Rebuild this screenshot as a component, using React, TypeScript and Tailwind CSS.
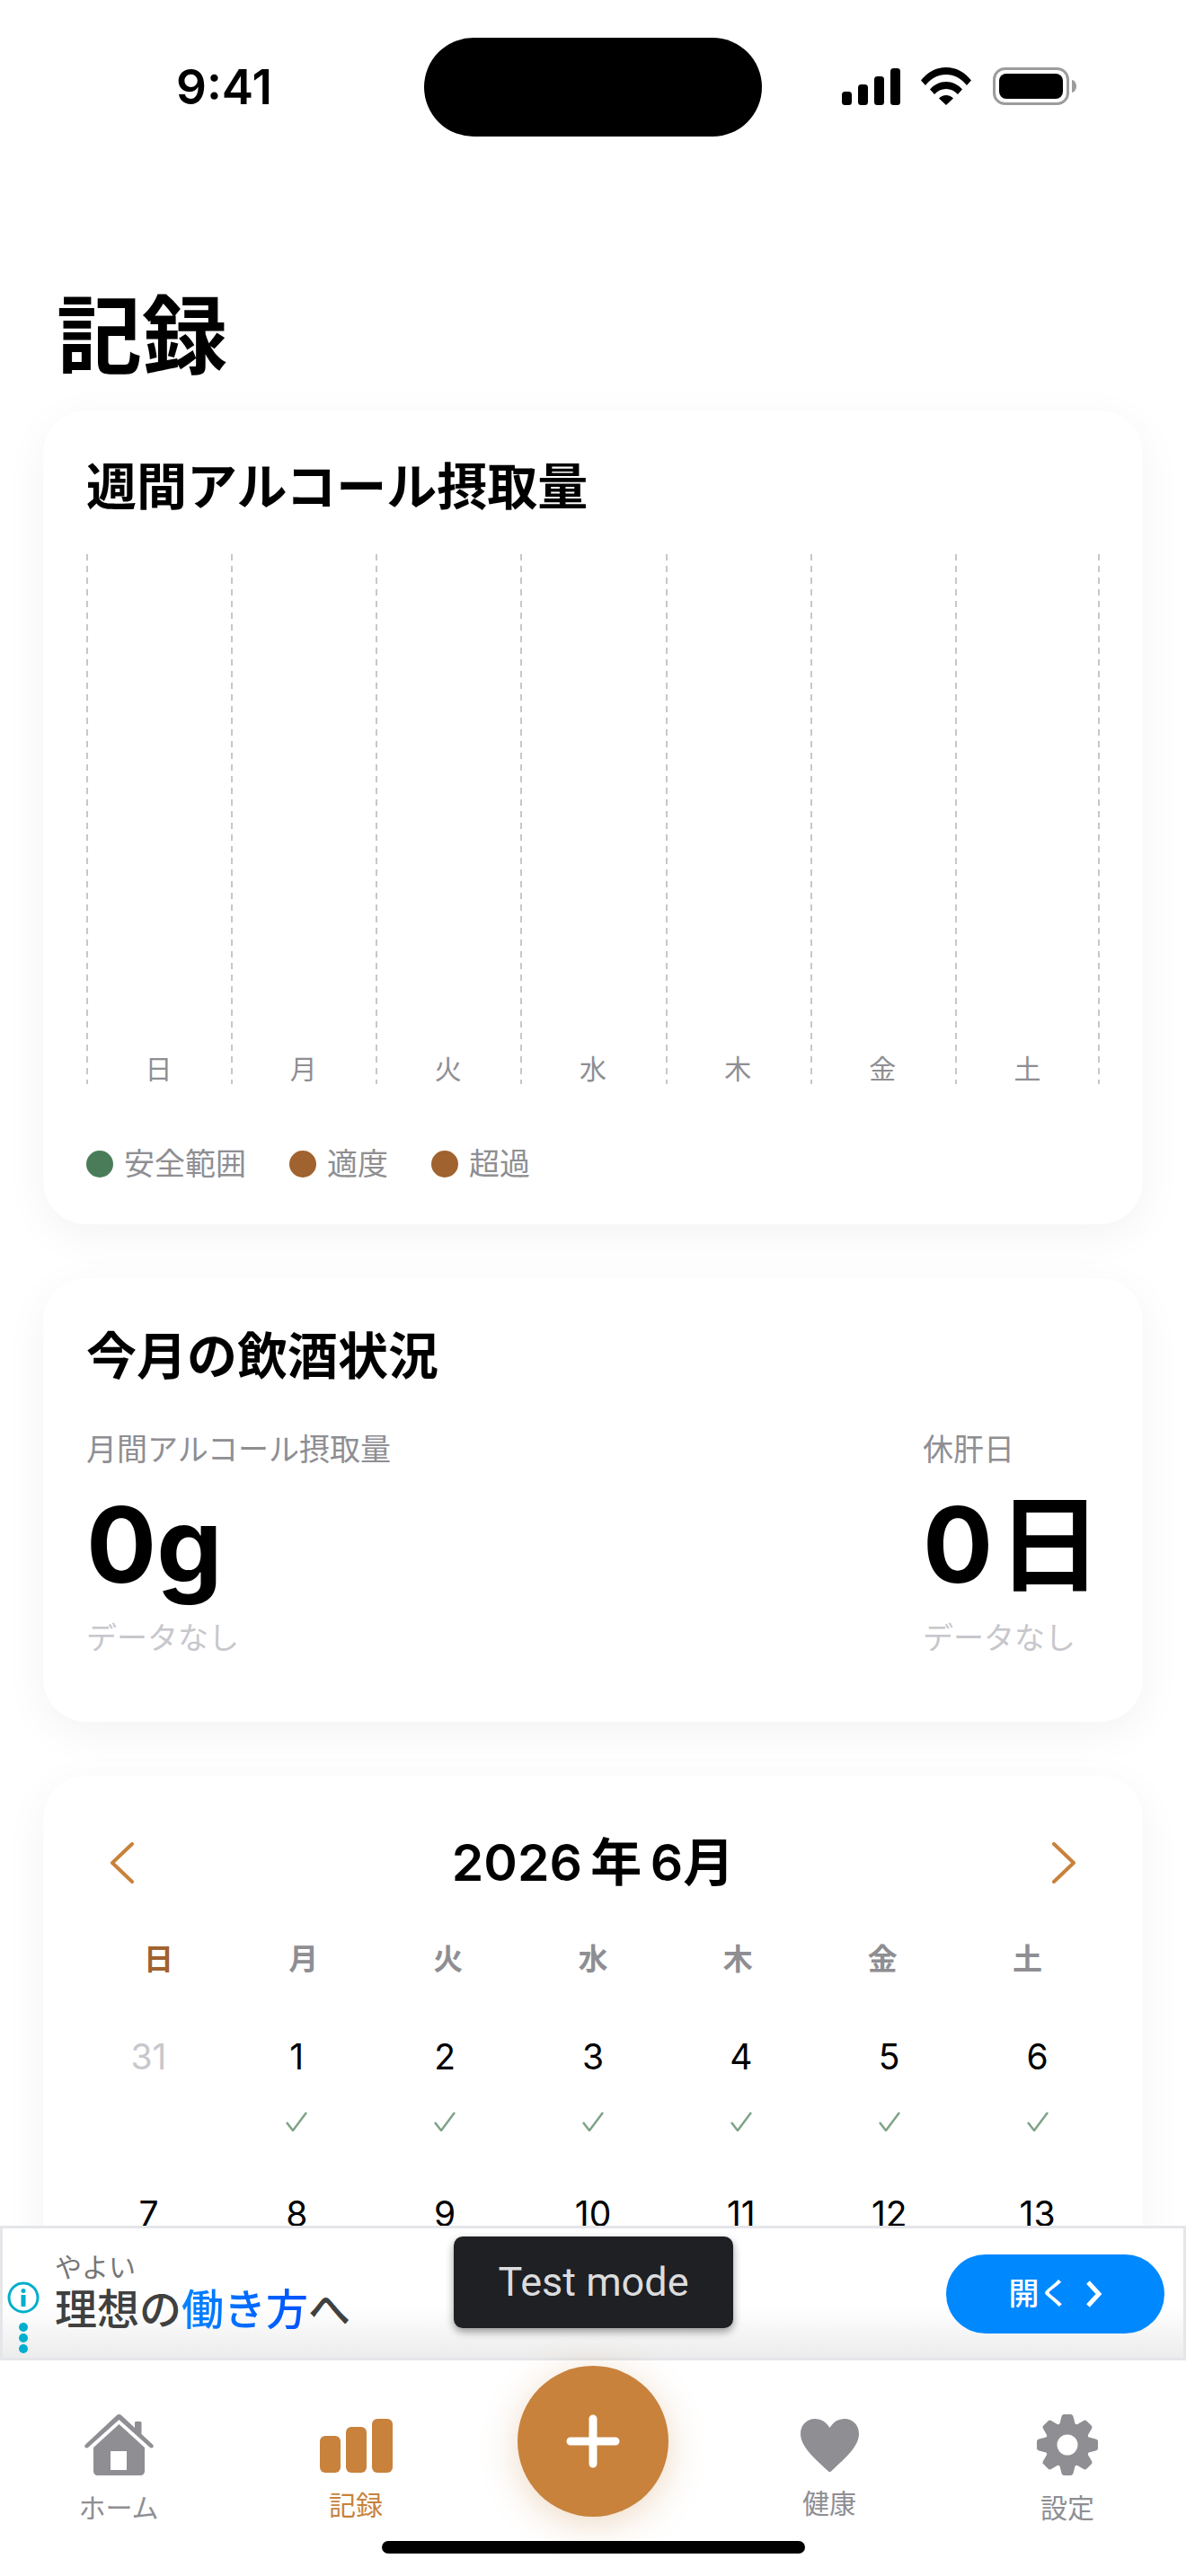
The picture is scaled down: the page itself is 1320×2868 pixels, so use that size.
const CJK = "font-['Inter','Noto_Sans_CJK_JP',sans-serif]";

const days = ["日", "月", "火", "水", "木", "金", "土"];
const weekOne = ["31", "1", "2", "3", "4", "5", "6"];
const weekTwo = ["7", "8", "9", "10", "11", "12", "13"];
const gearAngles = [0, 45, 90, 135, 180, 225, 270, 315];

const Card = ({ children, className }: { children: React.ReactNode; className: string }) => (
  <div className={`mx-12 rounded-[48px] bg-white shadow-[0_12px_48px_0_rgba(0,0,0,0.05)] ${className}`}>
    {children}
  </div>
);

const StatusBar = () => (
  <div className="flex h-[150px] shrink-0 items-start pt-[42px]">
    <div className="w-[472px] pl-[196px] pt-[27px] text-[53px] leading-[56px] font-semibold text-black">9:41</div>
    <div className="h-[110px] w-[376px] rounded-[55px] bg-black" />
    <div className="flex items-center pl-[89px] pt-[33px]">
      <svg width="65" height="41" viewBox="0 0 65 41">
        <rect x="0" y="26" width="11" height="15" rx="3.5" />
        <rect x="18" y="18" width="11" height="23" rx="3.5" />
        <rect x="36" y="9" width="11" height="32" rx="3.5" />
        <rect x="54" y="0" width="11" height="41" rx="3.5" />
      </svg>
      <svg className="ml-[23px]" width="56" height="42" viewBox="0 0 56 42">
        <path d="M0 14.5C7.5 5 17 0 28 0s20.500 5 28 14.500l-5 5.500C44.500 12 37 8 28 8S11.500 12 5 20z" />
        <path d="M10 24.500C15 19 21 16 28 16s13 3 18 8.500l-5 5.500C37.500 26 33 24 28 24s-9.500 2-13 6z" />
        <path d="M20 34.500c2-2 5-3.500 8-3.500s6 1.500 8 3.500L28 42z" />
      </svg>
      <svg className="ml-[24px]" width="93" height="42" viewBox="0 0 93 42">
        <rect x="1.500" y="1.500" width="82" height="39" rx="12" fill="none" stroke="#9c9c9c" strokeWidth="3" />
        <rect x="7" y="7" width="71" height="28" rx="8" />
        <path d="M88 14c3 .5 5 3.500 5 7s-2 6.500-5 7z" fill="#9c9c9c" />
      </svg>
    </div>
  </div>
);

const WeeklyCard = () => (
  <Card className="h-[906px] px-12 pt-[51px]">
    <h2 className="text-[56px] leading-[68px] font-bold text-black">週間アルコール摂取量</h2>
    <div className="mt-[36px] flex h-[595px] bg-[linear-gradient(#c7c7cc_55%,transparent_55%)] bg-[length:2px_13px] bg-right bg-repeat-y">
      {days.map((d) => (
        <div
          key={d}
          className="flex flex-1 items-end justify-center bg-[linear-gradient(#c7c7cc_55%,transparent_55%)] bg-[length:2px_13px] bg-left bg-repeat-y"
        >
          <span className="text-[30px] leading-[34px] text-[#8e8e93]">{d}</span>
        </div>
      ))}
    </div>
    <div className="mt-[67px] flex items-center text-[34px] leading-[44px] text-[#8e8e93]">
      <span className="h-[30px] w-[30px] rounded-full bg-[#4a7c59]" />
      <span className="ml-[12px]">安全範囲</span>
      <span className="ml-[48px] h-[30px] w-[30px] rounded-full bg-[#a0622f]" />
      <span className="ml-[12px]">適度</span>
      <span className="ml-[48px] h-[30px] w-[30px] rounded-full bg-[#a0622f]" />
      <span className="ml-[12px]">超過</span>
    </div>
  </Card>
);

const Stat = ({ label, value, className }: { label: string; value: React.ReactNode; className?: string }) => (
  <div className={className}>
    <div className="text-[34px] leading-[44px] text-[#8e8e93]">{label}</div>
    <div className="mt-[14px] text-[116px] leading-[140px] font-bold whitespace-nowrap text-black">{value}</div>
    <div className="mt-[12px] text-[34px] leading-[44px] text-[#c7c7cc]">データなし</div>
  </div>
);

const MonthCard = () => (
  <Card className="mt-[60px] h-[494px] px-12 pt-[53px]">
    <h2 className="text-[56px] leading-[68px] font-bold text-black">今月の飲酒状況</h2>
    <div className="mt-[48px] flex justify-between">
      <Stat label="月間アルコール摂取量" value="0g" />
      <Stat
        label="休肝日"
        value={
          <>
            0<span className="ml-[5px]">日</span>
          </>
        }
        className="w-[197px]"
      />
    </div>
  </Card>
);

const Check = () => (
  <svg width="24" height="22" viewBox="0 0 24 22" fill="none" stroke="#7ea387" strokeWidth="2.500">
    <path d="M1 12l7 9L23 1" />
  </svg>
);

const CalendarCard = () => (
  <Card className="mt-[60px] h-[700px] shrink-0 px-12 pt-[62px]">
    <div className="flex items-center justify-between px-[27px]">
      <svg width="26" height="46" viewBox="0 0 26 46" fill="none" stroke="#c8823c" strokeWidth="4" strokeLinecap="round" strokeLinejoin="round">
        <path d="M24 2L2 23l22 21" />
      </svg>
      <div className="text-[57px] leading-[70px] font-semibold text-black">{"2026\u2009年\u20096月"}</div>
      <svg width="26" height="46" viewBox="0 0 26 46" fill="none" stroke="#c8823c" strokeWidth="4" strokeLinecap="round" strokeLinejoin="round">
        <path d="M2 2l22 21L2 44" />
      </svg>
    </div>
    <div className="mt-[50px] flex">
      {days.map((d, i) => (
        <div key={d} className={`flex-1 text-center text-[33px] leading-[44px] font-semibold ${i === 0 ? "text-[#a0622f]" : "text-[#8e8e93]"}`}>
          {d}
        </div>
      ))}
    </div>
    <div className="-mx-[13px] mt-[63px] flex">
      {weekOne.map((d, i) => (
        <div key={d} className="flex flex-1 flex-col items-center">
          <div className={`text-[39px] leading-[48px] ${i === 0 ? "text-[#c7c7cc]" : "text-black"}`}>{d}</div>
          <div className="mt-[37px] flex h-[22px] items-center">{i > 0 && <Check />}</div>
        </div>
      ))}
    </div>
    <div className="-mx-[13px] mt-[68px] flex">
      {weekTwo.map((d) => (
        <div key={d} className="flex-1 text-center text-[39px] leading-[48px] text-black">{d}</div>
      ))}
    </div>
  </Card>
);

const AdBanner = () => (
  <div className="relative flex h-[150px] shrink-0 items-center border-[3px] border-[#e4e6e9] bg-gradient-to-b from-white from-60% to-[#ececec]">
    <div className="flex w-[58px] flex-col items-start self-end pb-[5px] pl-[5px]">
      <div className="flex flex-col items-center">
        <svg width="36" height="36" viewBox="0 0 36 36">
          <circle cx="18" cy="18" r="16" fill="none" stroke="#00aecd" strokeWidth="3" />
          <circle cx="18" cy="10.500" r="2.500" fill="#00aecd" />
          <rect x="15.500" y="15" width="5" height="13" fill="#00aecd" />
        </svg>
        <div className="mt-[10px] flex flex-col gap-[2px]">
          <span className="block h-[10px] w-[10px] rounded-full bg-[#00aecd]" />
          <span className="block h-[10px] w-[10px] rounded-full bg-[#00aecd]" />
          <span className="block h-[10px] w-[10px] rounded-full bg-[#00aecd]" />
        </div>
      </div>
    </div>
    <div className="flex flex-col">
      <div className="text-[30px] leading-[36px] text-[#777777]">やよい</div>
      <div className="text-[47px] leading-[58px] font-medium text-[#404040]">
        理想の<span className="bg-gradient-to-r from-[#0a84ff] to-[#0050ff] bg-clip-text text-transparent">働き方</span>へ
      </div>
    </div>
    <div className="mt-[1px] mr-[21px] ml-auto flex h-[88px] w-[243px] items-center justify-center gap-[18px] rounded-[44px] bg-[#0088ff] text-[34px] leading-[40px] font-medium text-white">
      <span>開く</span>
      <svg width="18" height="30" viewBox="0 0 18 30" fill="none" stroke="#ffffff" strokeWidth="5">
        <path d="M2 2l12 13L2 28" />
      </svg>
    </div>
  </div>
);

const TestModeBadge = () => (
  <div className="absolute top-[2490px] left-[505px] flex h-[102px] w-[311px] items-center justify-center rounded-[10px] bg-[#1f2023] font-['Roboto',sans-serif] text-[45px] text-[#dcdcde] shadow-[0_4px_10px_rgba(0,0,0,0.4)]">
    Test mode
  </div>
);

const NavItem = ({ label, color, icon, className }: { label: string; color: string; icon: React.ReactNode; className: string }) => (
  <div className={`flex w-[200px] flex-col items-center ${color} ${className}`}>
    {icon}
    <span className="text-[30px] leading-[40px]">{label}</span>
  </div>
);

const BottomNav = () => (
  <div className="flex h-[240px] shrink-0 items-start bg-white">
    <NavItem
      className="ml-[32px] pt-[60px]"
      color="text-[#8e8e93]"
      label="ホーム"
      icon={
        <svg className="mb-[16px]" width="77" height="68" viewBox="0 0 77 68" fill="#8e8e93">
          <path d="M38.500 0c1 0 1.800.4 2.500 1l15 14V9.500c0-.8.600-1.500 1.500-1.500H62c.8 0 1.500.7 1.500 1.500V22l12.300 11.500c1.500 1.400 1.300 3-.3 3.800-1 .5-2 .2-3-.7L38.500 6 4.500 36.600c-1 .9-2 1.200-3 .7-1.600-.8-1.800-2.400-.3-3.800L36 1c.7-.6 1.500-1 2.500-1z" />
          <path fillRule="evenodd" d="M38.500 11L10 37v26c0 3 2 5 5 5h47c3 0 5-2 5-5V37zM29 41h18v21H29z" />
        </svg>
      }
    />
    <NavItem
      className="ml-[64px] pt-[65px]"
      color="text-[#c8823c]"
      label="記録"
      icon={
        <div className="mb-[16px] flex h-[60px] items-end gap-[6px]">
          <span className="h-[41px] w-[23px] rounded-[6px] bg-[#c8823c]" />
          <span className="h-[51px] w-[23px] rounded-[6px] bg-[#c8823c]" />
          <span className="h-[60px] w-[23px] rounded-[6px] bg-[#c8823c]" />
        </div>
      }
    />
    <NavItem
      className="ml-[327px] pt-[65px]"
      color="text-[#8e8e93]"
      label="健康"
      icon={
        <svg className="mb-[15px]" width="65" height="59" viewBox="0 0 65 59" fill="#8e8e93">
          <path d="M32.500 59c-.8 0-1.500-.5-2.500-1.500C13 42 0 30 0 16.500 0 7 7 0 16 0c7 0 12.500 3.500 16.500 10C36.500 3.500 42 0 49 0c9 0 16 7 16 16.500C65 30 52 42 35 57.500c-1 1-1.700 1.500-2.500 1.500z" />
        </svg>
      }
    />
    <NavItem
      className="ml-[65px] pt-[60px]"
      color="text-[#8e8e93]"
      label="設定"
      icon={
        <svg className="mb-[16px]" width="68" height="68" viewBox="0 0 68 68" fill="#8e8e93">
          {gearAngles.map((a) => (
            <path key={a} transform={`rotate(${a} 34 34)`} d="M24.500 14L27.500 2.500C27.900 .9 28.800 0 30.400 0h7.200c1.600 0 2.500.9 2.900 2.500L43.500 14z" />
          ))}
          <path fillRule="evenodd" d="M34 9a25 25 0 1 0 0 50 25 25 0 0 0 0-50zM34 22.500a11.500 11.500 0 1 1 0 23 11.500 11.500 0 0 1 0-23z" />
        </svg>
      }
    />
  </div>
);

const AddButton = () => (
  <div className="absolute top-[2634px] left-[576px] flex h-[168px] w-[168px] items-center justify-center rounded-full bg-[#c8823c] shadow-[0_8px_40px_rgba(200,130,60,0.3)]">
    <svg width="60" height="60" viewBox="0 0 60 60" fill="none" stroke="#ffffff" strokeWidth="9" strokeLinecap="round">
      <path d="M30 5v50M5 30h50" />
    </svg>
  </div>
);

export default function App() {
  return (
    <div className={`relative flex h-[2868px] w-[1320px] flex-col overflow-hidden bg-white ${CJK}`}>
      <StatusBar />
      <div className="min-h-0 flex-1 overflow-hidden">
        <h1 className="mt-[171px] ml-[63px] text-[95px] leading-[108px] font-bold text-black">記録</h1>
        <div className="mt-[28px]">
          <WeeklyCard />
          <MonthCard />
          <CalendarCard />
        </div>
      </div>
      <AdBanner />
      <BottomNav />
      <TestModeBadge />
      <AddButton />
      <div className="absolute bottom-[25px] left-[425px] h-[14px] w-[471px] rounded-full bg-black" />
    </div>
  );
}
